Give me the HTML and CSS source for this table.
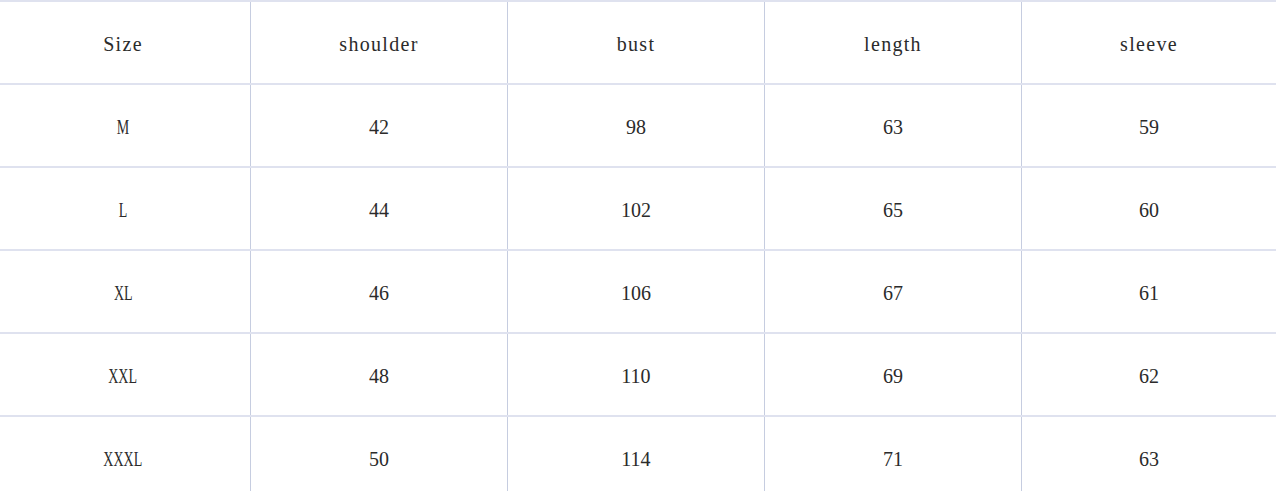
FILE: index.html
```html
<!DOCTYPE html>
<html>
<head>
<meta charset="utf-8">
<link rel="stylesheet" href="styles.css">
</head>
<body>
<div class="sheet">
  <div class="row">
    <div class="cell word">Size</div><div class="cell word">shoulder</div><div class="cell word">bust</div><div class="cell word">length</div><div class="cell word">sleeve</div>
  </div>
  <div class="row">
    <div class="cell"><span class="caps">M</span></div><div class="cell">42</div><div class="cell">98</div><div class="cell">63</div><div class="cell">59</div>
  </div>
  <div class="row">
    <div class="cell"><span class="caps">L</span></div><div class="cell">44</div><div class="cell">102</div><div class="cell">65</div><div class="cell">60</div>
  </div>
  <div class="row">
    <div class="cell"><span class="caps">XL</span></div><div class="cell">46</div><div class="cell">106</div><div class="cell">67</div><div class="cell">61</div>
  </div>
  <div class="row">
    <div class="cell"><span class="caps">XXL</span></div><div class="cell">48</div><div class="cell">110</div><div class="cell">69</div><div class="cell">62</div>
  </div>
  <div class="row">
    <div class="cell"><span class="caps">XXXL</span></div><div class="cell">50</div><div class="cell">114</div><div class="cell">71</div><div class="cell">63</div>
  </div>
</div>
</body>
</html>
```
FILE: styles.css
```css
html, body {
  margin: 0;
  padding: 0;
  background: #ffffff;
}
body {
  width: 1276px;
  height: 491px;
  overflow: hidden;
}
.sheet {
  display: flex;
  flex-direction: column;
}
.row {
  display: grid;
  grid-template-columns: 250px 257px 257px 257px 1fr;
  border-top: 2px solid #dfe2ef;
  height: 81px;
}
.cell {
  display: flex;
  align-items: center;
  justify-content: center;
  padding-top: 4px;
  box-sizing: border-box;
  font-family: "Liberation Serif", serif;
  font-size: 20px;
  color: #2b2b2b;
}
.cell:first-child {
  padding-right: 4px;
}
.word {
  letter-spacing: 1.3px;
}
.caps {
  display: inline-block;
  transform: scaleX(0.7);
}
.cell + .cell {
  border-left: 1px solid #c6cde0;
}
```
